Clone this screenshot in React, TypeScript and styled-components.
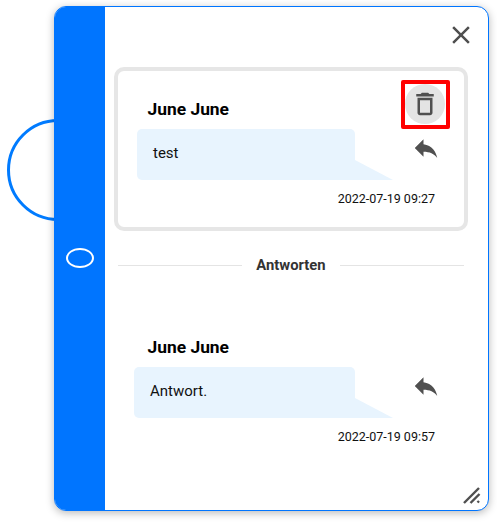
import React from "react";
import styled, { createGlobalStyle } from "styled-components";

const Global = createGlobalStyle`
  html, body { margin: 0; padding: 0; background: #fff; }
  * { box-sizing: border-box; }
  body { font-family: Roboto, "Liberation Sans", sans-serif; color: #000; overflow: hidden; }
`;

const Page = styled.div`
  position: relative;
  width: 497px;
  height: 523px;
  padding: 6px 0 0 54px;
`;

const Launcher = styled.div`
  position: absolute;
  left: 7px;
  top: 119px;
  width: 102px;
  height: 102px;
  border: 3px solid #007bff;
  border-radius: 50%;
`;

const Dialog = styled.section`
  position: relative;
  display: flex;
  width: 435px;
  height: 505px;
  background: #fff;
  border: 1px solid #0075ff;
  border-radius: 12px;
  overflow: hidden;
  box-shadow: 0 2px 8px rgba(0, 0, 0, 0.28);
`;

const Sidebar = styled.aside`
  flex: 0 0 51px;
  margin: -1px 0 -1px -1px;
  background: #0075ff;
  display: flex;
  align-items: center;
  justify-content: center;
`;

const Oval = styled.div`
  width: 28px;
  height: 20px;
  margin-top: -1px;
  border: 2.5px solid #fff;
  border-radius: 50%;
`;

const Main = styled.main`
  flex: 1;
  display: flex;
  flex-direction: column;
  padding: 0 12px 0 9px;
`;

const CloseRow = styled.div`
  height: 60px;
  display: flex;
  justify-content: flex-end;
  padding: 13px 0 0;
`;

const IconButton = styled.button`
  width: 30px;
  height: 30px;
  padding: 0;
  border: 0;
  background: none;
  color: #505050;
  display: block;
  svg { display: block; fill: currentColor; }
`;

const Card = styled.article`
  width: 354px;
  height: 164px;
  border: 4px solid #e6e6e6;
  border-radius: 10px;
  padding-top: 9px;
`;

const Plain = styled.article`
  width: 354px;
  padding: 44px 4px 0;
`;

const Head = styled.header`
  display: flex;
  justify-content: space-between;
  align-items: flex-end;
  height: 49px;
  padding: 0 14px 0 29.5px;
`;

const Name = styled.h3`
  margin: 0 0 10px;
  font-size: 17.4px;
  line-height: 20px;
  font-weight: 700;
  color: #000;
`;

const Highlight = styled.div`
  width: 49px;
  height: 49px;
  border: 4px solid #ff0000;
  border-radius: 2px;
  display: flex;
  align-items: center;
  justify-content: center;
`;

const TrashCircle = styled.div`
  width: 40px;
  height: 40px;
  margin: -1px 1px 0 0;
  border-radius: 50%;
  background: #e4e4e4;
  color: #505050;
  display: flex;
  align-items: center;
  justify-content: center;
  svg { display: block; fill: currentColor; }
`;

const Body = styled.div<{ $inset: number }>`
  display: flex;
  justify-content: space-between;
  align-items: flex-start;
  padding: 0 23px 0 ${(p) => p.$inset}px;
`;

const Bubble = styled.div<{ $width: number }>`
  position: relative;
  width: ${(p) => p.$width}px;
  height: 51px;
  padding: 0 16px;
  background: #e8f4fe;
  border-radius: 5px 5px 0 5px;
  font-size: 15px;
  line-height: 49px;
  color: #111;
  &::after {
    content: "";
    position: absolute;
    left: 100%;
    bottom: 0;
    width: 38px;
    height: 20px;
    background: #e8f4fe;
    clip-path: polygon(0 0, 100% 100%, 0 100%);
  }
`;

const ReplyButton = styled(IconButton)`
  margin-top: 4px;
`;

const Stamp = styled.time`
  display: block;
  margin-top: 11px;
  padding-right: 29px;
  text-align: right;
  font-size: 12.5px;
  line-height: 16px;
  color: #111;
`;

const Divider = styled.div`
  display: flex;
  align-items: center;
  gap: 14px;
  width: 346px;
  margin: 25px 0 0 4px;
  height: 18px;
  font-size: 14.8px;
  font-weight: 700;
  color: #333;
  &::before, &::after {
    content: "";
    flex: 1;
    height: 1px;
    background: #e4e4e4;
  }
`;

const ResizeGrip = styled.svg`
  position: absolute;
  right: 5px;
  bottom: 5px;
  width: 20px;
  height: 20px;
  stroke: #505050;
  stroke-width: 2.4;
  fill: none;
`;

const closePath = "M19 6.41 17.59 5 12 10.59 6.41 5 5 6.41 10.59 12 5 17.59 6.41 19 12 13.41 17.59 19 19 17.59 13.41 12z";
const replyPath = "M10 9V5l-7 7 7 7v-4.1c5 0 8.5 1.6 11 5.1-1-5-4-10-11-11z";
const trashPath = "M6 19c0 1.1.9 2 2 2h8c1.1 0 2-.9 2-2V7H6v12zM8 9h8v10H8V9zm7.5-5l-1-1h-5l-1 1H5v2h14V4h-3.5z";

const Icon = ({ d }: { d: string }) => (
  <svg width="30" height="30" viewBox="0 0 24 24" aria-hidden="true">
    <path d={d} />
  </svg>
);

const Reply = () => (
  <ReplyButton aria-label="Antworten">
    <Icon d={replyPath} />
  </ReplyButton>
);

export default function App() {
  return (
    <Page>
      <Global />
      <Launcher />
      <Dialog>
        <Sidebar>
          <Oval />
        </Sidebar>
        <Main>
          <CloseRow>
            <IconButton aria-label="Schließen">
              <Icon d={closePath} />
            </IconButton>
          </CloseRow>
          <Card>
            <Head>
              <Name>June June</Name>
              <Highlight>
                <TrashCircle>
                  <Icon d={trashPath} />
                </TrashCircle>
              </Highlight>
            </Head>
            <Body $inset={19}>
              <Bubble $width={218}>test</Bubble>
              <Reply />
            </Body>
            <Stamp>2022-07-19 09:27</Stamp>
          </Card>
          <Divider>Antworten</Divider>
          <Plain>
            <Head>
              <Name>June June</Name>
            </Head>
            <Body $inset={16}>
              <Bubble $width={221}>Antwort.</Bubble>
              <Reply />
            </Body>
            <Stamp>2022-07-19 09:57</Stamp>
          </Plain>
        </Main>
        <ResizeGrip viewBox="0 0 20 20" aria-hidden="true">
          <line x1="1" y1="18" x2="16" y2="3" />
          <line x1="7.5" y1="18" x2="16.5" y2="9" />
          <line x1="14.5" y1="17.5" x2="16" y2="16" />
        </ResizeGrip>
      </Dialog>
    </Page>
  );
}
